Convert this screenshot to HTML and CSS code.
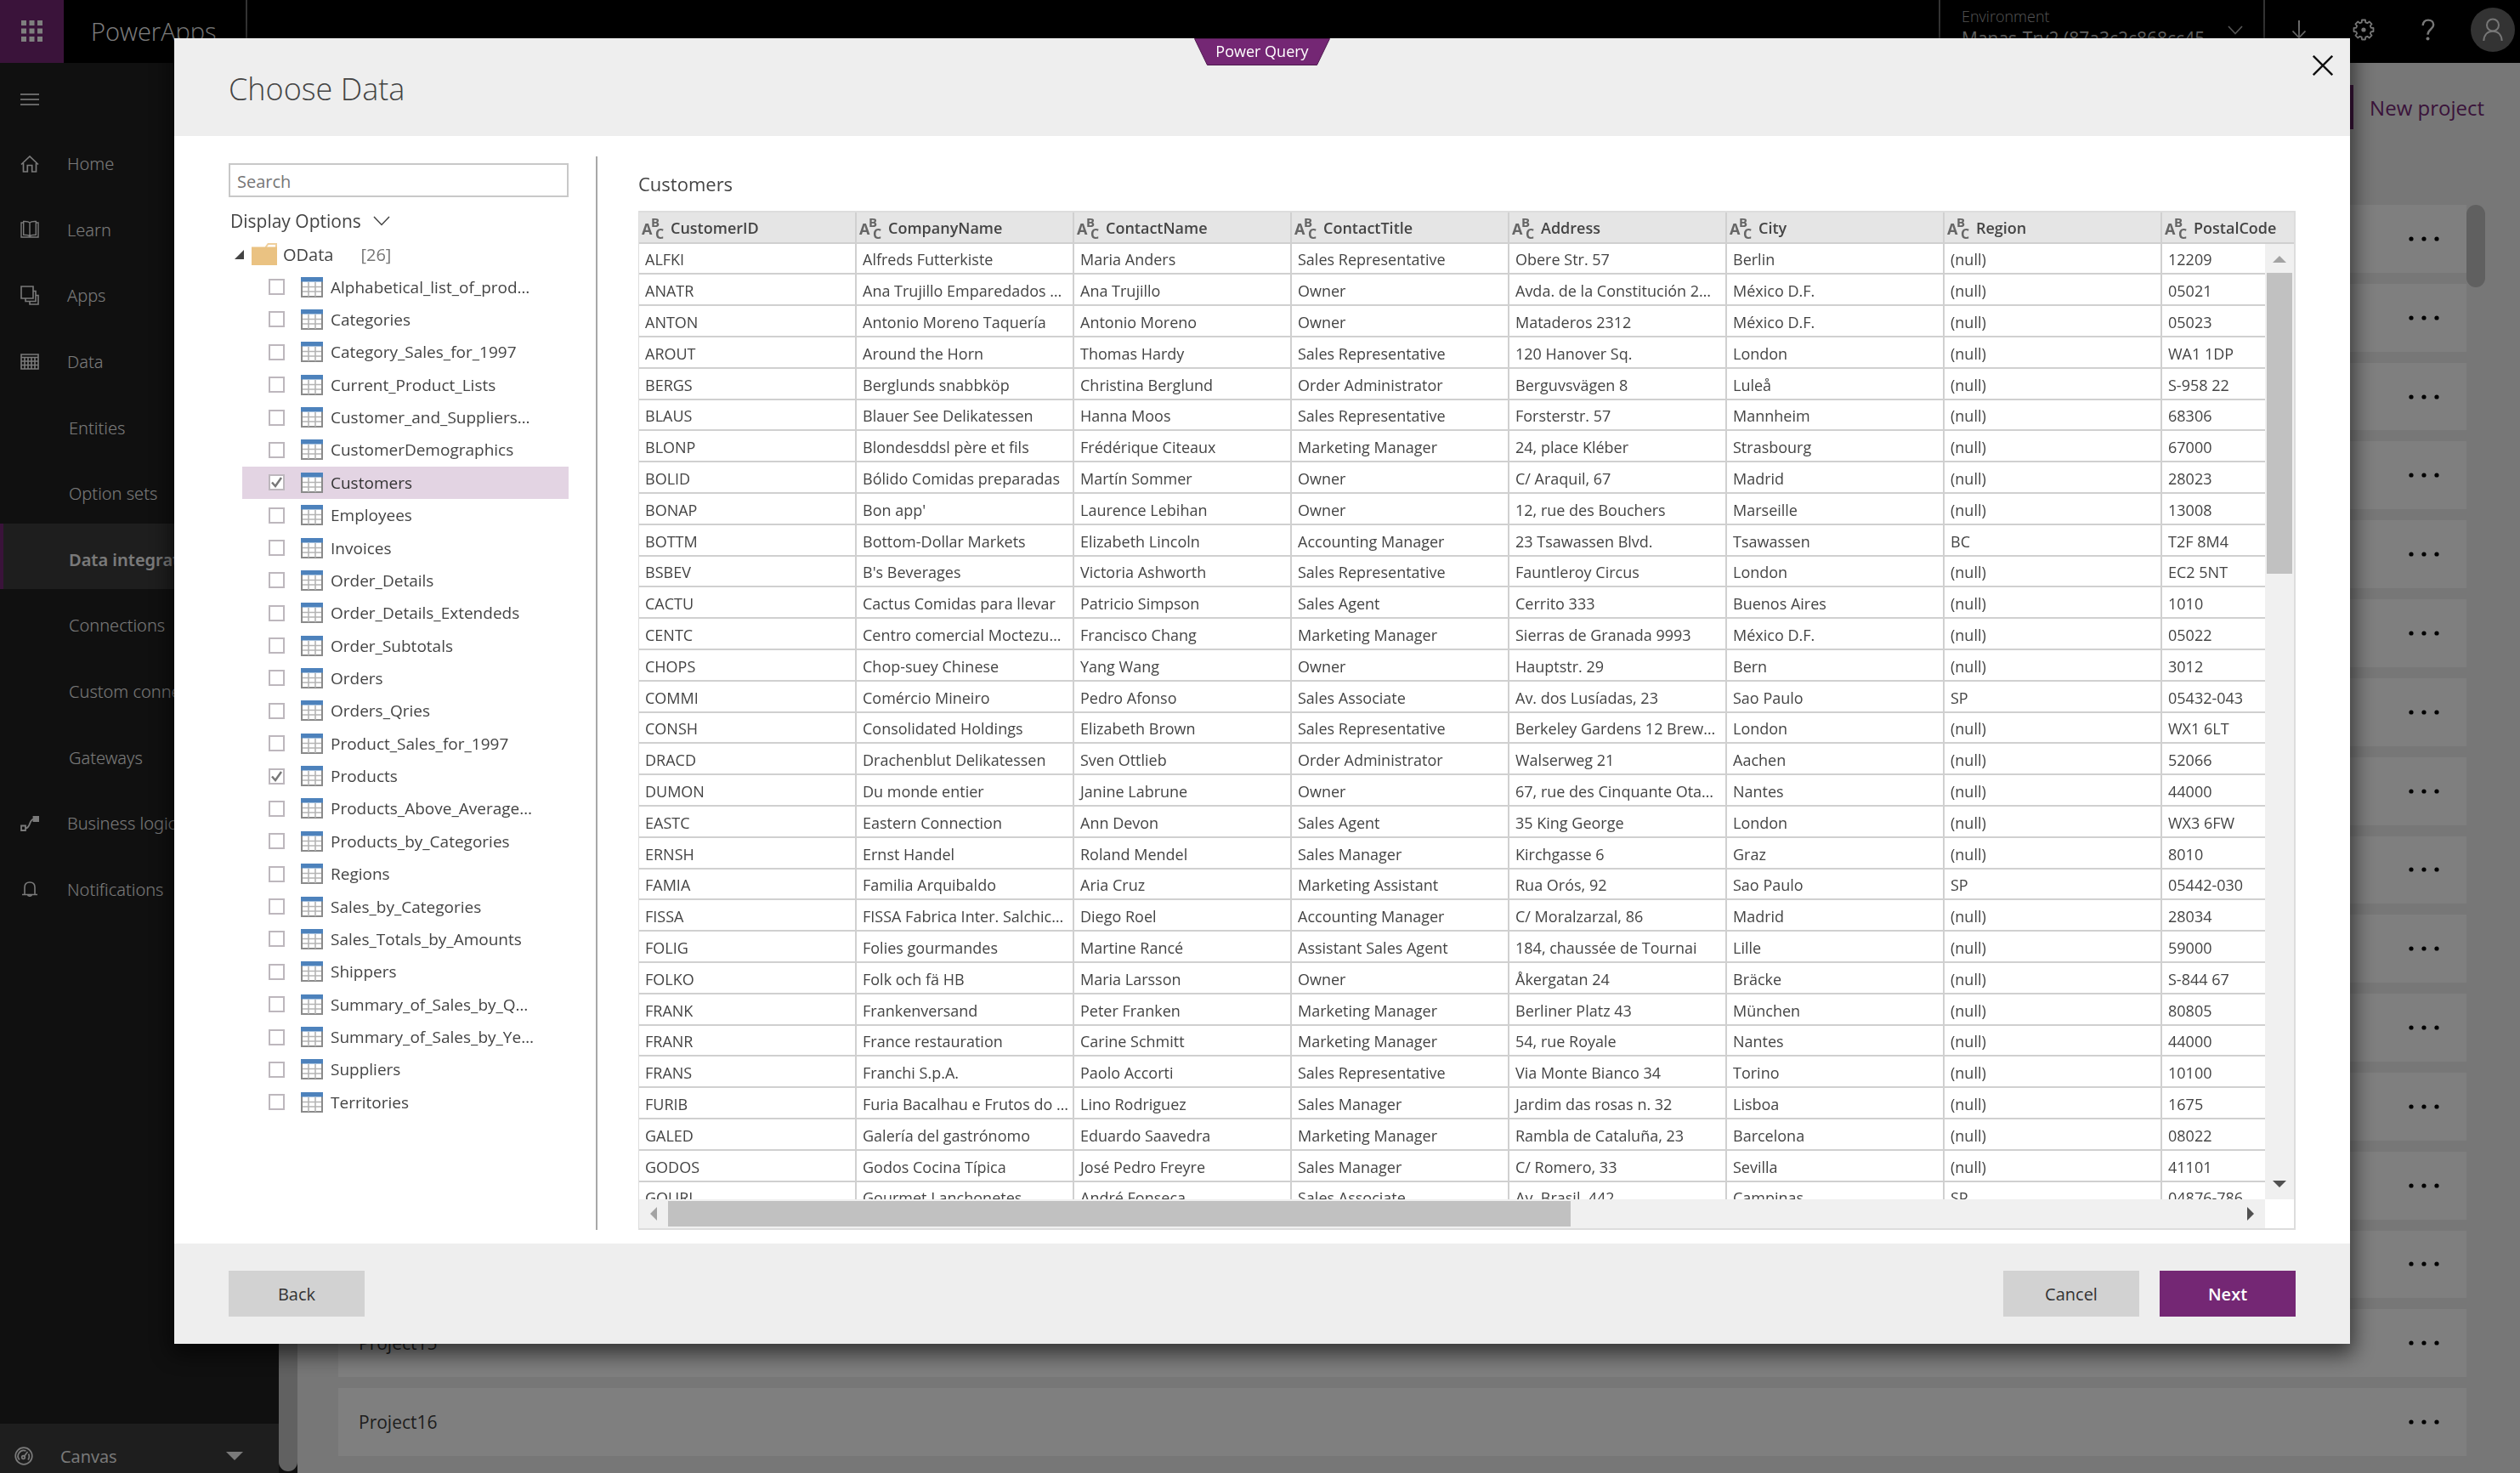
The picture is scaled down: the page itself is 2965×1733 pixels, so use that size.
FILE: index.html
```html
<!DOCTYPE html>
<html lang="en">
<head>
<meta charset="utf-8">
<title>PowerApps - Choose Data</title>
<link rel="stylesheet" href="styles.css">
</head>
<body>
<svg class="sprite" aria-hidden="true">
  <symbol id="i-table" viewBox="0 0 26 24">
    <rect x="1" y="1" width="24" height="22" fill="#fff" stroke="#8a8a8a" stroke-width="2"/>
    <path d="M2 11.5h22M2 17h22M9 6v17M17 6v17" stroke="#b4b4b4" stroke-width="1.6"/>
    <path d="M0 0h26v5.5H0z" fill="#4d82bc"/>
  </symbol>
  <symbol id="i-abc" viewBox="0 0 28 28">
    <g fill="#666" font-family="Open Sans, sans-serif" font-weight="700">
      <text x="0" y="21" font-size="18">A</text>
      <text x="11" y="12" font-size="15">B</text>
      <text x="16" y="26" font-size="16">C</text>
    </g>
  </symbol>
  <symbol id="i-dots" viewBox="0 0 36 6">
    <circle cx="3" cy="3" r="2.6"/><circle cx="18" cy="3" r="2.6"/><circle cx="33" cy="3" r="2.6"/>
  </symbol>
</svg>

<div class="app">
  <header class="topbar">
    <button class="waffle" aria-label="App launcher">
      <svg width="26" height="26" viewBox="0 0 26 26" fill="currentColor"><path d="M0 0h6v6H0zM9.500 0h6v6h-6zM19 0h6v6h-6zM0 9.500h6v6H0zM9.500 9.500h6v6h-6zM19 9.500h6v6h-6zM0 19h6v6H0zM9.500 19h6v6h-6zM19 19h6v6h-6z"/></svg>
    </button>
    <a class="brand" href="#">PowerApps</a>
    <button class="environment">
      <span class="env-text"><span class="env-label">Environment</span><span class="env-name">Manas-Try2 (87a3c2c868cc45...</span></span>
      <svg width="18" height="11" viewBox="0 0 18 11" fill="none" stroke="#bbb" stroke-width="1.6"><path d="M1 1l8 8.500L17 1"/></svg>
    </button>
    <div class="top-actions">
      <button aria-label="Download"><svg width="18" height="22" viewBox="0 0 18 22" fill="none" stroke="currentColor" stroke-width="1.8"><path d="M9 0v20M1.500 12.500L9 20.300l7.500-7.800"/></svg></button>
      <button aria-label="Settings"><svg width="26" height="26" viewBox="-13 -13 26 26" fill="none" stroke="currentColor" stroke-width="1.8" stroke-linejoin="round"><path d="M-2.300-8.700L-2-11.500H2L2.300-8.700L4.500-7.800L6.700-9.600L9.600-6.700L7.800-4.500L8.700-2.300L11.500-2V2L8.700 2.300L7.800 4.500L9.600 6.700L6.700 9.600L4.500 7.800L2.300 8.700L2 11.500H-2L-2.300 8.700L-4.500 7.800L-6.700 9.600L-9.600 6.700L-7.800 4.500L-8.700 2.300L-11.500 2V-2L-8.700-2.300L-7.800-4.500L-9.600-6.700L-6.700-9.600L-4.500-7.800Z"/><circle r="2.600" fill="currentColor" stroke="none"/></svg></button>
      <button aria-label="Help"><svg width="16" height="26" viewBox="0 0 16 26" fill="none" stroke="currentColor" stroke-width="2.400"><path d="M1.700 8C1.700 4 4.200 1.600 8 1.600s6.200 2.400 6.200 5.600c0 5-6.700 5.600-6.700 11.600"/><circle cx="7.500" cy="23.400" r="2" fill="currentColor" stroke="none"/></svg></button>
      <button class="avatar" aria-label="Account"><svg width="24" height="28" viewBox="0 0 24 28" fill="none" stroke="currentColor" stroke-width="2"><circle cx="12" cy="8.500" r="7"/><path d="M1.300 27C1.800 20 6 15.800 12 15.800S22.200 20 22.700 27"/></svg></button>
    </div>
  </header>

  <div class="workspace">
    <div class="sidebar">
      <button class="burger" aria-label="Collapse menu"><svg width="22" height="16" viewBox="0 0 22 16" stroke="currentColor" stroke-width="2"><path d="M0 2h22M0 8h22M0 14h22"/></svg></button>
      <nav class="nav">
        <a href="#"><svg width="22" height="20" viewBox="0 0 22 20" fill="none" stroke="currentColor" stroke-width="1.700"><path d="M1 10.500L11 1l10 9.500M3.500 9v10h4.800v-7.500h5.400V19h4.800V9"/></svg>Home</a>
        <a href="#"><svg width="22" height="22" viewBox="0 0 22 22" fill="none" stroke="currentColor" stroke-width="1.400"><path d="M3.500 3H1v17h20V3h-2.500M11 19C9.500 17.500 7 17.300 3.700 17.300V1.500C7 1.300 9.500 1.500 11 3c1.500-1.500 4-1.700 7.300-1.500v15.800c-3.300 0-5.800.2-7.300 1.700zM11 3v16"/></svg>Learn</a>
        <a href="#"><svg width="22" height="23" viewBox="0 0 22 23" fill="none" stroke="currentColor" stroke-width="1.600"><path d="M1 1h14v14H1zM15 6.500h3v12H6V15M18 11.500h3V22H11v-3.500"/></svg>Apps</a>
        <a href="#"><svg width="22" height="19" viewBox="0 0 22 19" fill="none" stroke="currentColor" stroke-width="1.600"><path d="M1 1h20v17H1zM1 4.500h20M1 9h20M1 13.500h20M5 4.500V18M9 4.500V18M13 4.500V18M17 4.500V18"/></svg>Data</a>
        <a class="sub" href="#">Entities</a>
        <a class="sub" href="#">Option sets</a>
        <a class="sub current" href="#">Data integration</a>
        <a class="sub" href="#">Connections</a>
        <a class="sub" href="#">Custom connectors</a>
        <a class="sub" href="#">Gateways</a>
        <a href="#"><svg width="22" height="18" viewBox="0 0 22 18" fill="none" stroke="currentColor" stroke-width="1.800"><path d="M1 11.500h5V17H1zM6 14.500c6 0 4-10.500 9.500-10.500"/><path d="M15.500 1h6v5h-6z" fill="currentColor"/></svg>Business logic</a>
        <a href="#"><svg width="22" height="18" viewBox="0 0 22 18" fill="none" stroke="currentColor" stroke-width="1.600"><path d="M2 15.500h18M5 15.500V7c0-4 2.500-6 6-6s6 2 6 6v8.500M8.500 15.500c.3 2.300 4.700 2.300 5 0"/></svg>Notifications</a>
      </nav>
      <button class="mode">
        <svg width="22" height="22" viewBox="0 0 22 22" fill="none" stroke="currentColor" stroke-width="1.700"><circle cx="11" cy="11" r="9.800"/><path d="M6 15.500A6.600 6.600 0 0 1 13.500 5M16.500 8.500a6.600 6.600 0 0 1-.5 7M11 12l4.500-6"/><circle cx="10.500" cy="12.500" r="1.800"/></svg>
        <span>Canvas</span>
        <svg class="mode-caret" width="20" height="10" viewBox="0 0 20 10" fill="currentColor"><path d="M0 0h20L10 10z"/></svg>
      </button>
    </div>
    <div class="side-scroll"><i></i></div>
    <main class="content">
      <div class="content-head"><button class="new-project"><i></i>New project</button></div>
      <div class="content-body">
        <ul class="projects">
          <li>Project1<button aria-label="More"><svg width="36" height="6"><use href="#i-dots"/></svg></button></li>
          <li>Project2<button aria-label="More"><svg width="36" height="6"><use href="#i-dots"/></svg></button></li>
          <li>Project3<button aria-label="More"><svg width="36" height="6"><use href="#i-dots"/></svg></button></li>
          <li>Project4<button aria-label="More"><svg width="36" height="6"><use href="#i-dots"/></svg></button></li>
          <li>Project5<button aria-label="More"><svg width="36" height="6"><use href="#i-dots"/></svg></button></li>
          <li>Project6<button aria-label="More"><svg width="36" height="6"><use href="#i-dots"/></svg></button></li>
          <li>Project7<button aria-label="More"><svg width="36" height="6"><use href="#i-dots"/></svg></button></li>
          <li>Project8<button aria-label="More"><svg width="36" height="6"><use href="#i-dots"/></svg></button></li>
          <li>Project9<button aria-label="More"><svg width="36" height="6"><use href="#i-dots"/></svg></button></li>
          <li>Project10<button aria-label="More"><svg width="36" height="6"><use href="#i-dots"/></svg></button></li>
          <li>Project11<button aria-label="More"><svg width="36" height="6"><use href="#i-dots"/></svg></button></li>
          <li>Project12<button aria-label="More"><svg width="36" height="6"><use href="#i-dots"/></svg></button></li>
          <li>Project13<button aria-label="More"><svg width="36" height="6"><use href="#i-dots"/></svg></button></li>
          <li>Project14<button aria-label="More"><svg width="36" height="6"><use href="#i-dots"/></svg></button></li>
          <li>Project15<button aria-label="More"><svg width="36" height="6"><use href="#i-dots"/></svg></button></li>
          <li>Project16<button aria-label="More"><svg width="36" height="6"><use href="#i-dots"/></svg></button></li>
        </ul>
        <div class="content-scroll"></div>
      </div>
    </main>
  </div>
</div>

<div class="overlay">
  <section class="modal" role="dialog" aria-labelledby="dialog-title">
    <header class="modal-head">
      <h1 id="dialog-title">Choose Data</h1>
      <div class="tab"><svg width="160" height="32" viewBox="0 0 160 32"><path d="M.5.5h159L144.500 31.500h-129z" fill="#742774" stroke="#4e1a4e"/></svg><span>Power Query</span></div>
      <button class="close" aria-label="Close"><svg width="24" height="24" viewBox="0 0 24 24" stroke="#111" stroke-width="2.400"><path d="M.8.8l22.400 22.400M23.200.8L.8 23.200"/></svg></button>
    </header>

    <div class="modal-body">
      <div class="picker">
        <input class="search" type="text" placeholder="Search" aria-label="Search">
        <button class="display-options">Display Options<svg width="20" height="12" viewBox="0 0 20 12" fill="none" stroke="#444" stroke-width="1.500"><path d="M1 1l9 9.500L19 1"/></svg></button>
        <ul class="tree">
          <li class="root">
            <svg width="11" height="11" viewBox="0 0 12 12"><path d="M12 0v12H0z" fill="#444"/></svg>
            <svg class="folder" width="30" height="26" viewBox="0 0 30 26"><path d="M16.500 5L19.500 1H29v5" fill="#fff" stroke="#efcf9c" stroke-width="2"/><path d="M0 4.500h30V26H0z" fill="#eac282"/></svg>
            <span>OData</span><span class="count">[26]</span>
          </li>
          <li><label title="Alphabetical_list_of_products"><input type="checkbox"><svg width="26" height="24"><use href="#i-table"/></svg><span>Alphabetical_list_of_prod…</span></label></li>
          <li><label><input type="checkbox"><svg width="26" height="24"><use href="#i-table"/></svg><span>Categories</span></label></li>
          <li><label><input type="checkbox"><svg width="26" height="24"><use href="#i-table"/></svg><span>Category_Sales_for_1997</span></label></li>
          <li><label><input type="checkbox"><svg width="26" height="24"><use href="#i-table"/></svg><span>Current_Product_Lists</span></label></li>
          <li><label title="Customer_and_Suppliers_by_Cities"><input type="checkbox"><svg width="26" height="24"><use href="#i-table"/></svg><span>Customer_and_Suppliers…</span></label></li>
          <li><label><input type="checkbox"><svg width="26" height="24"><use href="#i-table"/></svg><span>CustomerDemographics</span></label></li>
          <li class="selected"><label><input type="checkbox" checked><svg width="26" height="24"><use href="#i-table"/></svg><span>Customers</span></label></li>
          <li><label><input type="checkbox"><svg width="26" height="24"><use href="#i-table"/></svg><span>Employees</span></label></li>
          <li><label><input type="checkbox"><svg width="26" height="24"><use href="#i-table"/></svg><span>Invoices</span></label></li>
          <li><label><input type="checkbox"><svg width="26" height="24"><use href="#i-table"/></svg><span>Order_Details</span></label></li>
          <li><label><input type="checkbox"><svg width="26" height="24"><use href="#i-table"/></svg><span>Order_Details_Extendeds</span></label></li>
          <li><label><input type="checkbox"><svg width="26" height="24"><use href="#i-table"/></svg><span>Order_Subtotals</span></label></li>
          <li><label><input type="checkbox"><svg width="26" height="24"><use href="#i-table"/></svg><span>Orders</span></label></li>
          <li><label><input type="checkbox"><svg width="26" height="24"><use href="#i-table"/></svg><span>Orders_Qries</span></label></li>
          <li><label><input type="checkbox"><svg width="26" height="24"><use href="#i-table"/></svg><span>Product_Sales_for_1997</span></label></li>
          <li><label><input type="checkbox" checked><svg width="26" height="24"><use href="#i-table"/></svg><span>Products</span></label></li>
          <li><label title="Products_Above_Average_Prices"><input type="checkbox"><svg width="26" height="24"><use href="#i-table"/></svg><span>Products_Above_Average…</span></label></li>
          <li><label><input type="checkbox"><svg width="26" height="24"><use href="#i-table"/></svg><span>Products_by_Categories</span></label></li>
          <li><label><input type="checkbox"><svg width="26" height="24"><use href="#i-table"/></svg><span>Regions</span></label></li>
          <li><label><input type="checkbox"><svg width="26" height="24"><use href="#i-table"/></svg><span>Sales_by_Categories</span></label></li>
          <li><label><input type="checkbox"><svg width="26" height="24"><use href="#i-table"/></svg><span>Sales_Totals_by_Amounts</span></label></li>
          <li><label><input type="checkbox"><svg width="26" height="24"><use href="#i-table"/></svg><span>Shippers</span></label></li>
          <li><label title="Summary_of_Sales_by_Quarters"><input type="checkbox"><svg width="26" height="24"><use href="#i-table"/></svg><span>Summary_of_Sales_by_Q…</span></label></li>
          <li><label title="Summary_of_Sales_by_Years"><input type="checkbox"><svg width="26" height="24"><use href="#i-table"/></svg><span>Summary_of_Sales_by_Ye…</span></label></li>
          <li><label><input type="checkbox"><svg width="26" height="24"><use href="#i-table"/></svg><span>Suppliers</span></label></li>
          <li><label><input type="checkbox"><svg width="26" height="24"><use href="#i-table"/></svg><span>Territories</span></label></li>
        </ul>
      </div>

      <div class="preview">
        <h2>Customers</h2>
        <div class="grid-box">
          <div class="table-view">
            <table>
              <thead>
                <tr>
                  <th><svg width="28" height="28"><use href="#i-abc"/></svg>CustomerID</th>
                  <th><svg width="28" height="28"><use href="#i-abc"/></svg>CompanyName</th>
                  <th><svg width="28" height="28"><use href="#i-abc"/></svg>ContactName</th>
                  <th><svg width="28" height="28"><use href="#i-abc"/></svg>ContactTitle</th>
                  <th><svg width="28" height="28"><use href="#i-abc"/></svg>Address</th>
                  <th><svg width="28" height="28"><use href="#i-abc"/></svg>City</th>
                  <th><svg width="28" height="28"><use href="#i-abc"/></svg>Region</th>
                  <th><svg width="28" height="28"><use href="#i-abc"/></svg>PostalCode</th>
                </tr>
              </thead>
              <tbody>
                <tr><td>ALFKI<td>Alfreds Futterkiste<td>Maria Anders<td>Sales Representative<td>Obere Str. 57<td>Berlin<td>(null)<td>12209
                <tr><td>ANATR<td>Ana Trujillo Emparedados y helados<td>Ana Trujillo<td>Owner<td title="Avda. de la Constitución 2222">Avda. de la Constitución 2…<td>México D.F.<td>(null)<td>05021
                <tr><td>ANTON<td>Antonio Moreno Taquería<td>Antonio Moreno<td>Owner<td>Mataderos 2312<td>México D.F.<td>(null)<td>05023
                <tr><td>AROUT<td>Around the Horn<td>Thomas Hardy<td>Sales Representative<td>120 Hanover Sq.<td>London<td>(null)<td>WA1 1DP
                <tr><td>BERGS<td>Berglunds snabbköp<td>Christina Berglund<td>Order Administrator<td>Berguvsvägen 8<td>Luleå<td>(null)<td>S-958 22
                <tr><td>BLAUS<td>Blauer See Delikatessen<td>Hanna Moos<td>Sales Representative<td>Forsterstr. 57<td>Mannheim<td>(null)<td>68306
                <tr><td>BLONP<td>Blondesddsl père et fils<td>Frédérique Citeaux<td>Marketing Manager<td>24, place Kléber<td>Strasbourg<td>(null)<td>67000
                <tr><td>BOLID<td>Bólido Comidas preparadas<td>Martín Sommer<td>Owner<td>C/ Araquil, 67<td>Madrid<td>(null)<td>28023
                <tr><td>BONAP<td>Bon app'<td>Laurence Lebihan<td>Owner<td>12, rue des Bouchers<td>Marseille<td>(null)<td>13008
                <tr><td>BOTTM<td>Bottom-Dollar Markets<td>Elizabeth Lincoln<td>Accounting Manager<td>23 Tsawassen Blvd.<td>Tsawassen<td>BC<td>T2F 8M4
                <tr><td>BSBEV<td>B's Beverages<td>Victoria Ashworth<td>Sales Representative<td>Fauntleroy Circus<td>London<td>(null)<td>EC2 5NT
                <tr><td>CACTU<td>Cactus Comidas para llevar<td>Patricio Simpson<td>Sales Agent<td>Cerrito 333<td>Buenos Aires<td>(null)<td>1010
                <tr><td>CENTC<td>Centro comercial Moctezuma<td>Francisco Chang<td>Marketing Manager<td>Sierras de Granada 9993<td>México D.F.<td>(null)<td>05022
                <tr><td>CHOPS<td>Chop-suey Chinese<td>Yang Wang<td>Owner<td>Hauptstr. 29<td>Bern<td>(null)<td>3012
                <tr><td>COMMI<td>Comércio Mineiro<td>Pedro Afonso<td>Sales Associate<td>Av. dos Lusíadas, 23<td>Sao Paulo<td>SP<td>05432-043
                <tr><td>CONSH<td>Consolidated Holdings<td>Elizabeth Brown<td>Sales Representative<td>Berkeley Gardens 12 Brewery<td>London<td>(null)<td>WX1 6LT
                <tr><td>DRACD<td>Drachenblut Delikatessen<td>Sven Ottlieb<td>Order Administrator<td>Walserweg 21<td>Aachen<td>(null)<td>52066
                <tr><td>DUMON<td>Du monde entier<td>Janine Labrune<td>Owner<td title="67, rue des Cinquante Otages">67, rue des Cinquante Ota…<td>Nantes<td>(null)<td>44000
                <tr><td>EASTC<td>Eastern Connection<td>Ann Devon<td>Sales Agent<td>35 King George<td>London<td>(null)<td>WX3 6FW
                <tr><td>ERNSH<td>Ernst Handel<td>Roland Mendel<td>Sales Manager<td>Kirchgasse 6<td>Graz<td>(null)<td>8010
                <tr><td>FAMIA<td>Familia Arquibaldo<td>Aria Cruz<td>Marketing Assistant<td>Rua Orós, 92<td>Sao Paulo<td>SP<td>05442-030
                <tr><td>FISSA<td>FISSA Fabrica Inter. Salchichas S.A.<td>Diego Roel<td>Accounting Manager<td>C/ Moralzarzal, 86<td>Madrid<td>(null)<td>28034
                <tr><td>FOLIG<td>Folies gourmandes<td>Martine Rancé<td>Assistant Sales Agent<td>184, chaussée de Tournai<td>Lille<td>(null)<td>59000
                <tr><td>FOLKO<td>Folk och fä HB<td>Maria Larsson<td>Owner<td>Åkergatan 24<td>Bräcke<td>(null)<td>S-844 67
                <tr><td>FRANK<td>Frankenversand<td>Peter Franken<td>Marketing Manager<td>Berliner Platz 43<td>München<td>(null)<td>80805
                <tr><td>FRANR<td>France restauration<td>Carine Schmitt<td>Marketing Manager<td>54, rue Royale<td>Nantes<td>(null)<td>44000
                <tr><td>FRANS<td>Franchi S.p.A.<td>Paolo Accorti<td>Sales Representative<td>Via Monte Bianco 34<td>Torino<td>(null)<td>10100
                <tr><td>FURIB<td>Furia Bacalhau e Frutos do Mar<td>Lino Rodriguez<td>Sales Manager<td>Jardim das rosas n. 32<td>Lisboa<td>(null)<td>1675
                <tr><td>GALED<td>Galería del gastrónomo<td>Eduardo Saavedra<td>Marketing Manager<td>Rambla de Cataluña, 23<td>Barcelona<td>(null)<td>08022
                <tr><td>GODOS<td>Godos Cocina Típica<td>José Pedro Freyre<td>Sales Manager<td>C/ Romero, 33<td>Sevilla<td>(null)<td>41101
                <tr><td>GOURL<td>Gourmet Lanchonetes<td>André Fonseca<td>Sales Associate<td>Av. Brasil, 442<td>Campinas<td>SP<td>04876-786
              </tbody>
            </table>
          </div>
          <div class="vbar">
            <svg width="34" height="34" viewBox="0 0 34 34"><path d="M9 22h16L17 14z" fill="#a3a3a3"/></svg>
            <i></i>
            <svg width="34" height="34" viewBox="0 0 34 34"><path d="M9 12h16L17 20z" fill="#505050"/></svg>
          </div>
          <div class="hbar">
            <svg width="34" height="34" viewBox="0 0 34 34"><path d="M21 9v16L13 17z" fill="#a3a3a3"/></svg>
            <i></i>
            <svg width="34" height="34" viewBox="0 0 34 34"><path d="M13 9v16L21 17z" fill="#505050"/></svg>
          </div>
        </div>
      </div>
    </div>

    <footer class="modal-foot">
      <button class="btn">Back</button>
      <span class="foot-right"><button class="btn">Cancel</button><button class="btn primary">Next</button></span>
    </footer>
  </section>
</div>
</body>
</html>
```
FILE: styles.css
```css
* { box-sizing: border-box; }
html, body { height: 100%; }
body {
  margin: 0;
  overflow: hidden;
  font-family: "Open Sans", "Noto Sans", sans-serif;
  font-size: 20px;
  color: #444;
  background: #efefef;
}
button {
  margin: 0;
  padding: 0;
  border: 0;
  background: none;
  font: inherit;
  color: inherit;
}
a { color: inherit; text-decoration: none; }
ul { list-style: none; margin: 0; padding: 0; }
svg { display: block; flex: none; }
h1, h2 { margin: 0; }
.sprite { display: none; }

/* Application behind the dialog */
.app { height: 100vh; display: flex; flex-direction: column; }
.topbar {
  display: flex;
  flex: none;
  height: 74px;
  background: #000;
  color: #fff;
}
.waffle { width: 75px; display: grid; place-items: center; background: #742774; }
.brand {
  width: 216px;
  padding-left: 32px;
  border-right: 2px solid #666;
  font-size: 29px;
  font-weight: 300;
  line-height: 74px;
}
.environment {
  display: flex;
  align-items: flex-start;
  justify-content: space-between;
  width: 384px;
  margin: 0 2px 0 auto;
  padding: 8px 24px 0 25px;
  border: solid #666;
  border-width: 0 2px;
  text-align: left;
}
.environment svg { margin-top: 22px; }
.env-text { display: flex; flex-direction: column; }
.env-label { font-size: 18px; line-height: 22px; color: #a8a8a8; font-weight: 300; }
.env-name { font-size: 21px; line-height: 30px; color: #ddd; }
.top-actions { display: flex; align-items: center; height: 70px; padding-right: 6px; color: #eee; }
.top-actions button { width: 76px; display: grid; place-items: center; }
.top-actions .avatar {
  width: 52px;
  height: 52px;
  margin-left: 12px;
  border-radius: 50%;
  background: #666;
}

.workspace { flex: 1; min-height: 0; display: flex; }
.sidebar {
  width: 328px;
  flex: none;
  display: flex;
  flex-direction: column;
  background: #202020;
  color: #f4f4f4;
}
.burger { height: 76px; padding: 10px 24px 0; display: flex; align-items: center; color: #ccc; }
.nav { display: grid; grid-auto-rows: 1fr; height: 931px; font-family: "Noto Sans", sans-serif; font-weight: 300; }
.nav a { display: flex; align-items: center; gap: 33px; padding: 8px 0 0 24px; white-space: nowrap; }
.nav .sub { padding-left: 81px; }
.nav .current { padding-left: 77px; border-left: 4px solid #742774; background: #3c3c3c; font-weight: 600; }
.mode {
  display: flex;
  align-items: center;
  height: 58px;
  margin-top: auto;
  padding: 18px 42px 0 17px;
  gap: 32px;
  background: #3c3c3c;
}
.mode-caret { margin-left: auto; }
.side-scroll { width: 22px; flex: none; display: flex; background: #202020; padding-bottom: 2px; }
.side-scroll i { flex: 1; border-radius: 11px; background: #c2c2c2; }

.content { flex: 1; display: flex; flex-direction: column; background: #efefef; }
.content-head { display: flex; justify-content: flex-end; height: 167px; padding: 26px 42px 0 0; }
.new-project { display: flex; align-items: center; gap: 19px; height: 52px; font-size: 24px; color: #742774; }
.new-project i { width: 52px; height: 52px; background: #742774; }
.content-body { display: flex; padding: 0 41px 0 48px; }
.projects { flex: 1; display: grid; grid-auto-rows: 1fr; gap: 13px; height: 1472px; font-size: 21px; color: #3c3c3c; }
.projects li {
  display: flex;
  align-items: center;
  justify-content: space-between;
  padding: 0 32px 0 24px;
  background: #fff;
}
.content-scroll { width: 22px; height: 97px; border-radius: 11px; background: #c0c0c0; }

/* Dialog */
.overlay {
  position: fixed;
  inset: 0;
  display: flex;
  padding: 45px 200px 152px 205px;
  background: rgba(0, 0, 0, .5);
}
.modal {
  flex: 1;
  min-width: 0;
  display: flex;
  flex-direction: column;
  background: #fff;
  box-shadow: 0 8px 24px 4px rgba(0, 0, 0, .6);
}
.modal-head {
  position: relative;
  flex: none;
  display: flex;
  justify-content: space-between;
  align-items: flex-start;
  height: 115px;
  padding: 20px 20px 0 64px;
  background: #eee;
}
.modal-head h1 { font-size: 36px; font-weight: 300; line-height: 80px; }
.tab {
  position: absolute;
  top: 0;
  left: 50%;
  display: grid;
  width: 160px;
  margin-left: -80px;
  color: #fff;
  font-size: 18px;
  line-height: 31px;
  text-align: center;
}
.tab > * { grid-area: 1 / 1; }

.modal-body { flex: 1; min-height: 0; display: flex; padding: 24px 64px 16px; }
.picker { width: 434px; flex: none; padding: 8px 32px 0 0; border-right: 2px solid #a8a8a8; }
.search {
  display: block;
  width: 100%;
  height: 40px;
  padding: 2px 8px 0;
  border: 2px solid #c8c8c8;
  outline: 0;
  font: inherit;
  color: #444;
}
.search::placeholder { color: #767676; opacity: 1; }
.display-options {
  display: flex;
  align-items: center;
  gap: 14px;
  height: 48px;
  padding: 8px 2px 0;
  font-size: 21px;
}
.tree { display: grid; grid: none / minmax(0, 1fr); grid-auto-rows: 1fr; height: 1036px; font-size: 19px; }
.tree li { margin-left: 16px; display: flex; }
.tree .root { margin-left: 7px; align-items: center; font-size: 20px; }
.folder { margin: 0 7px 0 9px; }
.count { margin-left: 32px; color: #767676; }
.tree label { flex: 1; min-width: 0; display: flex; align-items: center; padding: 0 24px 0 31px; }
.tree label span { overflow: hidden; text-overflow: ellipsis; white-space: nowrap; margin-left: 9px; }
.tree input {
  appearance: none;
  flex: none;
  width: 19px;
  height: 19px;
  margin: 0 19px 0 0;
  border: 2px solid #bdb7bd;
  background: #fff;
}
.tree input:checked {
  background: #fff url("data:image/svg+xml,%3Csvg xmlns='http://www.w3.org/2000/svg' viewBox='0 0 15 15'%3E%3Cpath d='M2 7.500l4 4.500 7-10' fill='none' stroke='%23777' stroke-width='2.500'/%3E%3C/svg%3E") center / 15px 15px no-repeat;
}
.tree .selected { background: #e3d4e3; color: #333; }

.preview { flex: 1; min-width: 0; display: flex; flex-direction: column; padding-left: 48px; }
.preview h2 { flex: none; height: 64px; padding-top: 2px; font-size: 22px; font-weight: 400; line-height: 60px; }
.grid-box {
  flex: 1;
  min-height: 0;
  display: grid;
  grid-template: minmax(0, 1fr) 34px / minmax(0, 1fr) 34px;
  border: 2px solid #ddd;
  border-left-width: 1px;
}
.table-view { grid-area: 1 / 1 / 2 / 3; overflow: hidden; }
table { width: 2048px; table-layout: fixed; border-collapse: separate; border-spacing: 0; font-size: 18px; }
th, td {
  height: 37px;
  border: solid #d0d0d0;
  border-width: 0 2px 2px 0;
  text-align: left;
  white-space: nowrap;
  overflow: hidden;
  text-overflow: ellipsis;
}
td { padding: 2px 4px 0 7px; line-height: 32px; }
th { padding: 0 4px 0 3px; line-height: 34px; background: #e5e5e5; font-weight: 600; }
th svg { float: left; margin: 4px 6px 0 0; }
tr:nth-child(5n+1) td { height: 36px; }
.vbar {
  grid-area: 1 / 2;
  margin-top: 37px;
  display: flex;
  flex-direction: column;
  justify-content: space-between;
  background: #f0f0f0;
}
.vbar i { height: 31.5%; margin: 0 2px auto; background: #c1c1c1; }
.hbar { grid-area: 2 / 1; display: flex; background: #f0f0f0; }
.hbar i { width: 55.5%; margin: 2px auto 2px 0; background: #c1c1c1; }

.modal-foot {
  flex: none;
  display: flex;
  justify-content: space-between;
  padding: 32px 64px;
  background: #eee;
}
.foot-right { display: flex; gap: 24px; }
.btn { width: 160px; height: 54px; background: #d2d2d2; color: #333; }
.primary { background: #742774; color: #fff; font-weight: 600; }
```
